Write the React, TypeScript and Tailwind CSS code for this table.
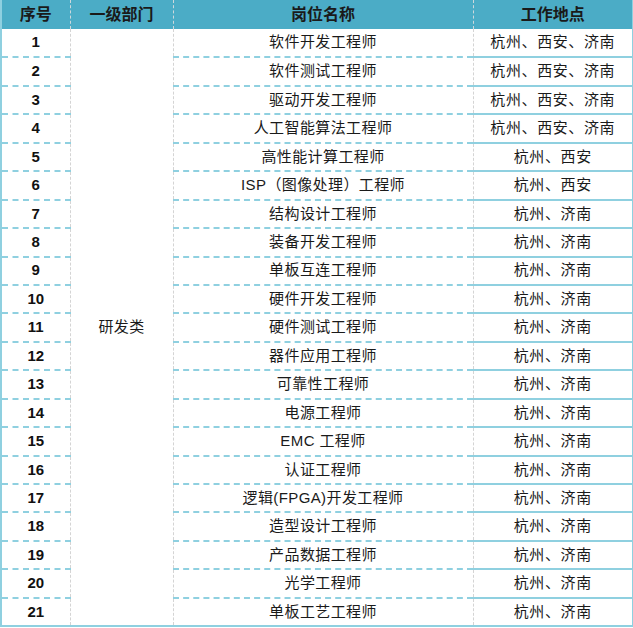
import React from "react";

const rows: [string, string][] = [
  ["软件开发工程师", "杭州、西安、济南"],
  ["软件测试工程师", "杭州、西安、济南"],
  ["驱动开发工程师", "杭州、西安、济南"],
  ["人工智能算法工程师", "杭州、西安、济南"],
  ["高性能计算工程师", "杭州、西安"],
  ["ISP（图像处理）工程师", "杭州、西安"],
  ["结构设计工程师", "杭州、济南"],
  ["装备开发工程师", "杭州、济南"],
  ["单板互连工程师", "杭州、济南"],
  ["硬件开发工程师", "杭州、济南"],
  ["硬件测试工程师", "杭州、济南"],
  ["器件应用工程师", "杭州、济南"],
  ["可靠性工程师", "杭州、济南"],
  ["电源工程师", "杭州、济南"],
  ["EMC 工程师", "杭州、济南"],
  ["认证工程师", "杭州、济南"],
  ["逻辑(FPGA)开发工程师", "杭州、济南"],
  ["造型设计工程师", "杭州、济南"],
  ["产品数据工程师", "杭州、济南"],
  ["光学工程师", "杭州、济南"],
  ["单板工艺工程师", "杭州、济南"],
];

const cjk = "font-['Liberation_Sans','Noto_Sans_CJK_SC',sans-serif]";

export default function App() {
  return (
    <div className={`w-[633px] h-[628px] bg-white ${cjk} text-[#1a1a1a]`}>
      <table className="border-collapse table-fixed w-[632px] border-l-2 border-r-2 border-b-2 border-[#8fd0e0]">
        <colgroup>
          <col className="w-[69px]" />
          <col className="w-[103px]" />
          <col className="w-[300px]" />
          <col className="w-[160px]" />
        </colgroup>
        <thead>
          <tr className="h-[29px] bg-[#4bacc6] text-[16px] font-bold text-[#1a1a1a]">
            <th className="p-0 text-center text-[#1a1a1a] border-r border-dashed border-r-[#cfd8dc]">序号</th>
            <th className="p-0 text-center text-[#1a1a1a] border-r border-dashed border-r-[#cfd8dc]">一级部门</th>
            <th className="p-0 text-center text-[#1a1a1a] border-r border-dashed border-r-[#cfd8dc]">岗位名称</th>
            <th className="p-0 text-center text-[#1a1a1a]">工作地点</th>
          </tr>
        </thead>
        <tbody>
          {rows.map(([name, loc], i) => (
            <tr key={i} className="h-[28.45px]">
              <td className="p-0 text-center font-bold text-[15px] text-[#111] font-['Liberation_Sans',sans-serif] border-b-2 border-b-[#8fd0e0] border-r border-dashed border-r-[#d4d4d4]">
                {i + 1}
              </td>
              {i === 0 && (
                <td
                  rowSpan={21}
                  className="p-0 text-center text-[15px] tracking-[0.3px] border-r border-dashed border-r-[#d4d4d4]"
                >
                  研发类
                </td>
              )}
              <td className="p-0 text-center text-[15px] tracking-[0.4px] border-b-2 border-b-[#8fd0e0] border-r border-dashed border-r-[#d4d4d4]">
                {name}
              </td>
              <td className="p-0 text-center text-[15px] tracking-[0.6px] border-b-2 border-b-[#8fd0e0]">
                {loc}
              </td>
            </tr>
          ))}
        </tbody>
      </table>
    </div>
  );
}
